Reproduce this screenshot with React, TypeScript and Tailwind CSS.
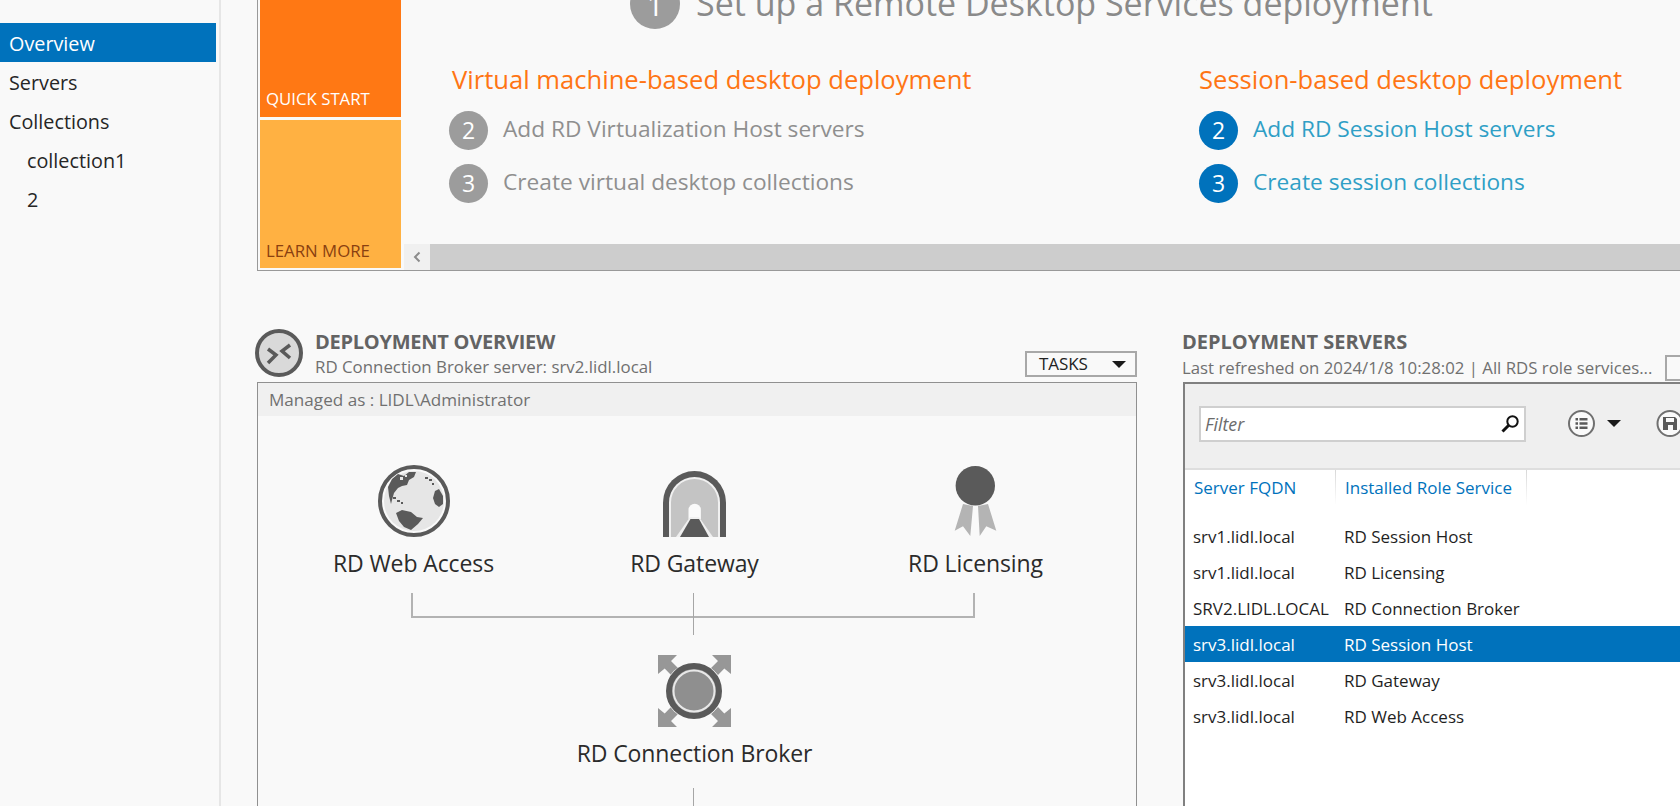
import React from "react";

const font = "font-['Open_Sans','Noto_Sans',sans-serif]";

const navItems = [
  { label: "Overview", selected: true },
  { label: "Servers" },
  { label: "Collections" },
  { label: "collection1", child: true },
  { label: "2", child: true },
];

const servers = [
  { fqdn: "srv1.lidl.local", role: "RD Session Host" },
  { fqdn: "srv1.lidl.local", role: "RD Licensing" },
  { fqdn: "SRV2.LIDL.LOCAL", role: "RD Connection Broker" },
  { fqdn: "srv3.lidl.local", role: "RD Session Host", selected: true },
  { fqdn: "srv3.lidl.local", role: "RD Gateway" },
  { fqdn: "srv3.lidl.local", role: "RD Web Access" },
];

function Caret() {
  return <div className="h-0 w-0 border-x-[7.5px] border-t-[7px] border-x-transparent border-t-[#1a1a1a]" />;
}

function Step({ n, text, active }: { n: number; text: string; active?: boolean }) {
  return (
    <div className="flex h-[39px] items-center">
      <div
        className={`flex h-[39px] w-[39px] items-center justify-center rounded-full text-[23px] text-white ${
          active ? "bg-[#0072bc]" : "bg-[#9c9c9c]"
        }`}
      >
        {n}
      </div>
      <span
        className={`ml-[15px] whitespace-nowrap pb-[2px] text-[22.7px] ${active ? "text-[#2f9fc6]" : "text-[#8f8f8f]"}`}
      >
        {text}
      </span>
    </div>
  );
}

function OverviewIcon() {
  return (
    <svg width="48" height="48" viewBox="0 0 48 48" className="-ml-[2px] shrink-0">
      <circle cx="24" cy="24" r="22" fill="#d9d9d9" stroke="#5a5a5a" strokeWidth="4" />
      <path d="M13 20 21 26 13 34M35 16 27 22 35 29" fill="none" stroke="#5a5a5a" strokeWidth="3.5" />
    </svg>
  );
}

function GlobeIcon() {
  return (
    <svg width="72" height="72" viewBox="0 0 72 72">
      <circle cx="36" cy="36" r="34" fill="#fafafa" stroke="#5a5a5a" strokeWidth="4" />
      <circle cx="36" cy="36" r="30" fill="#e6e6e6" />
      <path
        d="M10 22 14 14 20 9 26 11 31 7 38 7 36 12 31 15 29 20 24 21 20 23 16 28 14 35 13 39 11 31Z"
        fill="#5a5a5a"
      />
      <path d="M22 12h3v3h-3zM27 10h2v2h-2z" fill="#e6e6e6" />
      <path d="M15 32h3v2h-3zM19 35h3v2h-3zM23 37h2v2h-2zM47 12h3v2h-3zM51 14h3v2h-3zM54 18h2v2h-2z" fill="#5a5a5a" />
      <path d="M18 48 24 45 33 47 39 52 45 53 40 59 33 65 26 62 21 56Z" fill="#5a5a5a" />
      <path d="M57 26 61 24 65 31 65 39 61 42 57 39 55 33Z" fill="#5a5a5a" />
    </svg>
  );
}

function GatewayIcon() {
  return (
    <svg width="63" height="66" viewBox="0 0 63 66">
      <path d="M0 66V31.5a31.5 31.5 0 0 1 63 0V66Z" fill="#5a5a5a" />
      <path d="M6 66V31.5a25.5 25.5 0 0 1 51 0V66Z" fill="#f0f0f0" />
      <path d="M8 66V31.5a23.5 23.5 0 0 1 47 0V66Z" fill="#c4c4c4" />
      <path d="M25.5 48V39a6.2 6.2 0 0 1 12.4 0v9Z" fill="#fafafa" />
      <path d="M13 66 27 46h9l14 20Z" fill="#f0f0f0" />
      <path d="M17 66 27.5 48H36l10 18Z" fill="#5a5a5a" />
    </svg>
  );
}

function RibbonIcon() {
  return (
    <svg width="46" height="72" viewBox="0 0 46 72">
      <path d="M10 39 20 41 17.3 71 10 61.3 1.7 65.7Z" fill="#b4b4b4" />
      <path d="M25 41 35 39 43.3 65.7 33.3 61.3 26.7 71Z" fill="#b4b4b4" />
      <circle cx="22.3" cy="20.7" r="19.7" fill="#5a5a5a" />
    </svg>
  );
}

function BrokerIcon() {
  const arrow = "M0 0H19L13 6 20 13 13 20 6.7 13.5 0 19Z";
  return (
    <svg width="73" height="72" viewBox="0 0 73 72">
      <g fill="#979797">
        <path d={arrow} />
        <path d={arrow} transform="translate(73 0) scale(-1 1)" />
        <path d={arrow} transform="translate(0 72) scale(1 -1)" />
        <path d={arrow} transform="translate(73 72) scale(-1 -1)" />
      </g>
      <circle cx="36" cy="36" r="28.5" fill="#fafafa" />
      <circle cx="36" cy="36" r="25" fill="#8f8f8f" stroke="#5a5a5a" strokeWidth="6" />
      <circle cx="36" cy="36" r="20.5" fill="#8f8f8f" stroke="#e8e8e8" strokeWidth="2" />
    </svg>
  );
}

function SearchIcon() {
  return (
    <svg width="18" height="18" viewBox="0 0 18 18">
      <circle cx="11.5" cy="6.5" r="5.2" fill="none" stroke="#111" strokeWidth="2" />
      <path d="M7.5 10.5 1.5 16.5" stroke="#111" strokeWidth="3" />
    </svg>
  );
}

function ListIcon() {
  return (
    <svg width="27" height="27" viewBox="0 0 27 27">
      <circle cx="13.5" cy="13.5" r="12.5" fill="#fafafa" stroke="#707070" strokeWidth="2" />
      <path d="M7.5 8h2.5v2.5H7.5zM7.5 12.3h2.5v2.5H7.5zM7.5 16.6h2.5v2.5H7.5zM11.5 8h8v2.5h-8zM11.5 12.3h8v2.5h-8zM11.5 16.6h8v2.5h-8z" fill="#5a5a5a" />
    </svg>
  );
}

function SaveIcon() {
  return (
    <svg width="28" height="27" viewBox="0 0 28 27" className="shrink-0">
      <circle cx="14" cy="13.5" r="12.5" fill="#fafafa" stroke="#707070" strokeWidth="2" />
      <path d="M7 7h12l2 2v11H7Zm3 1v4h8V8Zm2 7v5h5v-5Z" fill="#5a5a5a" fillRule="evenodd" />
    </svg>
  );
}

function Node({ icon, label }: { icon: React.ReactNode; label: string }) {
  return (
    <div className="flex w-[281px] flex-col items-center">
      <div className="flex h-[72px] items-end">{icon}</div>
      <div className="mt-[11px] h-[30px] whitespace-nowrap text-[23px] leading-[30px] tracking-[-0.1px] text-[#2b2b2b]">
        {label}
      </div>
    </div>
  );
}

export default function App() {
  return (
    <div className={`flex h-[806px] w-[1680px] overflow-hidden bg-[#f9f9f9] ${font}`}>
      <aside className="w-[221px] shrink-0 border-r-2 border-[#e6e6e6] pr-[3px] pt-[23px]">
        {navItems.map((item) => (
          <div
            key={item.label}
            className={`flex h-[39px] items-center pt-[2px] text-[19.8px] ${item.child ? "pl-[27px]" : "pl-[9px]"} ${
              item.selected ? "bg-[#0072bc] text-white" : "text-[#262626]"
            }`}
          >
            {item.label}
          </div>
        ))}
      </aside>

      <main className="min-w-0 flex-1 pl-[36px]">
        {/* welcome tile panel */}
        <section className="flex h-[271px] border-b border-l border-[#999999]">
          <div className="ml-[2px] flex w-[141px] shrink-0 flex-col gap-[3px]">
            <div className="flex h-[117px] items-end bg-[#ff7814] pb-[6px] pl-[6px] text-[16.8px] leading-[24px] text-white">
              QUICK START
            </div>
            <div className="flex h-[148px] items-end bg-[#ffb142] pb-[5px] pl-[6px] text-[16.8px] leading-[24px] text-[#8a3f10]">
              LEARN MORE
            </div>
          </div>
          <div className="ml-[3px] flex min-w-0 flex-1 flex-col">
            <div className="h-[242px] pl-[45px]">
              <div className="-mt-[21px] ml-[181px] flex items-center gap-[16px]">
                <div className="flex h-[50px] w-[50px] shrink-0 items-center justify-center rounded-full bg-[#9c9c9c] text-[30px] text-white">
                  1
                </div>
                <span className="mb-[2px] whitespace-nowrap text-[34px] leading-[48px] text-[#8a8a8a]">
                  Set up a Remote Desktop Services deployment
                </span>
              </div>
              <div className="mt-[35px] flex">
                <div className="w-[750px] shrink-0">
                  <h2 className="h-[32px] whitespace-nowrap pl-[3px] text-[25.6px] leading-[32px] text-[#ff7514]">
                    Virtual machine-based desktop deployment
                  </h2>
                  <div className="mt-[15px] flex flex-col gap-[14px]">
                    <Step n={2} text="Add RD Virtualization Host servers" />
                    <Step n={3} text="Create virtual desktop collections" />
                  </div>
                </div>
                <div>
                  <h2 className="h-[32px] whitespace-nowrap text-[25.6px] leading-[32px] text-[#ff7514]">
                    Session-based desktop deployment
                  </h2>
                  <div className="mt-[15px] flex flex-col gap-[14px]">
                    <Step n={2} text="Add RD Session Host servers" active />
                    <Step n={3} text="Create session collections" active />
                  </div>
                </div>
              </div>
            </div>
            <div className="mt-[2px] flex h-[26px] bg-[#cdcdcd]">
              <div className="flex w-[26px] items-center justify-center bg-[#f0f0f0]">
                <svg width="8" height="12" viewBox="0 0 8 12">
                  <path d="M6.5 1.5 2 6l4.5 4.5" fill="none" stroke="#8c8c8c" strokeWidth="2" />
                </svg>
              </div>
            </div>
          </div>
        </section>

        <div className="mt-[58px] flex">
          {/* deployment overview */}
          <section className="w-[880px] shrink-0">
            <div className="flex h-[53px]">
              <OverviewIcon />
              <div className="ml-[12px] min-w-0">
                <div className="h-[26px] whitespace-nowrap text-[20px] font-bold leading-[26px] tracking-[-0.25px] text-[#636363]">
                  DEPLOYMENT OVERVIEW
                </div>
                <div className="h-[24px] whitespace-nowrap text-[16.85px] leading-[24px] text-[#707070]">
                  RD Connection Broker server: srv2.lidl.local
                </div>
              </div>
              <div className="ml-auto mt-[22px] flex h-[26px] w-[112px] items-center border-2 border-[#a8a8a8] pl-[12px] text-[17px] tracking-[-0.1px] text-[#222]">
                TASKS
                <div className="ml-auto mr-[9px]">
                  <Caret />
                </div>
              </div>
            </div>
            <div className="h-[440px] border border-[#909090]">
              <div className="flex h-[33px] items-center bg-[#f0f0f0] pl-[11px] pt-px text-[17.1px] text-[#707070]">
                Managed as : LIDL\Administrator
              </div>
              <div className="flex pl-[15px] pt-[49px]">
                <Node icon={<GlobeIcon />} label="RD Web Access" />
                <Node icon={<GatewayIcon />} label="RD Gateway" />
                <Node icon={<RibbonIcon />} label="RD Licensing" />
              </div>
              <div className="relative ml-[153px] mt-[15px] h-[25px] w-[564px] border-x-2 border-b-2 border-[#b3b3b3]">
                <div className="absolute left-[280px] top-0 h-[42px] w-px bg-[#a6a6a6]" />
              </div>
              <div className="ml-[296px] mt-[37px] w-[281px]">
                <Node icon={<BrokerIcon />} label="RD Connection Broker" />
              </div>
              <div className="ml-[435px] mt-[20px] h-[20px] w-px bg-[#a6a6a6]" />
            </div>
          </section>

          {/* deployment servers */}
          <section className="ml-[46px] min-w-0 flex-1 overflow-hidden">
            <div className="h-[53px]">
              <div className="-ml-px h-[26px] whitespace-nowrap text-[20px] font-bold leading-[26px] text-[#636363]">
                DEPLOYMENT SERVERS
              </div>
              <div className="flex h-[26px] items-center">
                <span className="-ml-px whitespace-nowrap text-[16.8px] text-[#707070]">
                  Last refreshed on 2024/1/8 10:28:02 | All RDS role services...
                </span>
                <div className="ml-[13px] h-[26px] w-[60px] shrink-0 border-2 border-[#a8a8a8]" />
              </div>
            </div>
            <div className="h-[440px] border-l-2 border-t-2 border-[#808080] bg-white">
              <div className="flex h-[86px] items-start border-b-2 border-[#dedede] bg-[#efefef] pl-[14px] pt-[22px]">
                <div className="flex h-[36px] w-[327px] shrink-0 items-center justify-between border-2 border-[#cfcfcf] bg-white pl-[4px] pr-[5px] text-[17.8px] italic text-[#6b6b6b]">
                  Filter
                  <SearchIcon />
                </div>
                <div className="ml-[42px] mt-[4px] flex items-center">
                  <ListIcon />
                  <div className="ml-[12px]">
                    <Caret />
                  </div>
                  <div className="ml-[35px]">
                    <SaveIcon />
                  </div>
                </div>
              </div>
              <div className="flex h-[35px] text-[17px] text-[#0072bc]">
                <div className="relative flex w-[151px] items-center whitespace-nowrap pl-[9px]">
                  Server FQDN
                  <div className="absolute right-0 top-0 h-full w-px bg-linear-to-b from-[#d8d8d8] to-white" />
                </div>
                <div className="relative flex w-[191px] items-center whitespace-nowrap pl-[9px]">
                  Installed Role Service
                  <div className="absolute right-0 top-0 h-full w-px bg-linear-to-b from-[#d8d8d8] to-white" />
                </div>
              </div>
              <div className="mt-[13px]">
                {servers.map((s, i) => (
                  <div
                    key={i}
                    className={`flex h-[36px] items-center pl-[8px] pt-[2px] text-[17px] ${
                      s.selected ? "bg-[#0072bc] text-white" : "text-[#1f1f1f]"
                    }`}
                  >
                    <div className="w-[151px] shrink-0 whitespace-nowrap">{s.fqdn}</div>
                    <div className="whitespace-nowrap">{s.role}</div>
                  </div>
                ))}
              </div>
            </div>
          </section>
        </div>
      </main>
    </div>
  );
}
